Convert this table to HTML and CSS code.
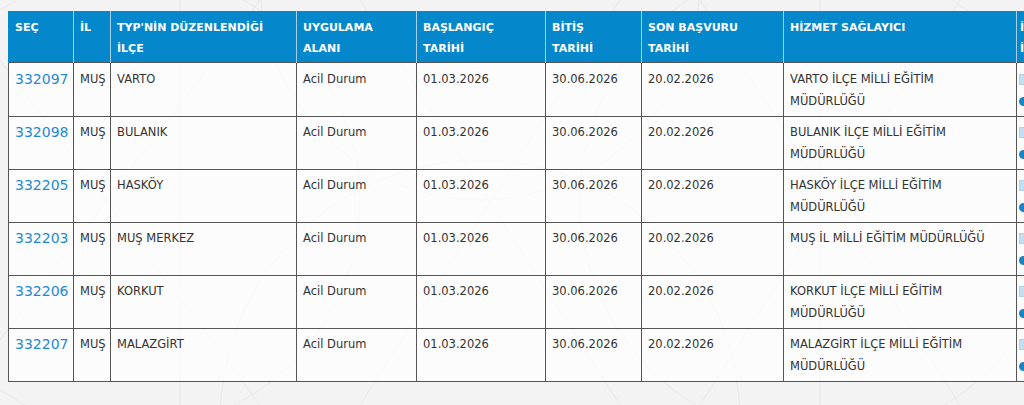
FILE: index.html
```html
<!DOCTYPE html>
<html lang="tr">
<head>
<meta charset="utf-8">
<title>TYP Listesi</title>
<link rel="stylesheet" href="styles.css">
</head>
<body>
<svg class="bg-pattern" width="1024" height="405" viewBox="0 0 1024 405" aria-hidden="true">
  <g fill="none" stroke="#e8e8e8" stroke-width="1">
    <circle cx="130" cy="200" r="230"/>
    <circle cx="480" cy="420" r="260"/>
    <circle cx="480" cy="-20" r="220"/>
    <circle cx="820" cy="200" r="240"/>
    <path d="M0 60 L260 405 M260 0 L0 340 M360 0 L620 405 M620 0 L360 405 M700 0 L960 405 M960 0 L700 405 M180 0 L180 405 M820 0 L820 405"/>
  </g>
</svg>
<div class="wrap">
  <table class="grid">
    <colgroup>
      <col class="c-sec"><col class="c-il"><col class="c-ilce"><col class="c-alan"><col class="c-bas"><col class="c-bit"><col class="c-son"><col class="c-hiz"><col class="c-act">
    </colgroup>
    <thead>
      <tr>
        <th>SEÇ</th>
        <th>İL</th>
        <th>TYP'NİN DÜZENLENDİĞİ<br>İLÇE</th>
        <th>UYGULAMA<br>ALANI</th>
        <th>BAŞLANGIÇ<br>TARİHİ</th>
        <th>BİTİŞ<br>TARİHİ</th>
        <th>SON BAŞVURU<br>TARİHİ</th>
        <th>HİZMET SAĞLAYICI</th>
        <th class="act-head">İŞLEM<br>İLAN</th>
      </tr>
    </thead>
    <tbody>
      <tr>
        <td><a class="id" href="#">332097</a></td><td>MUŞ</td><td>VARTO</td><td>Acil Durum</td><td>01.03.2026</td><td>30.06.2026</td><td>20.02.2026</td><td class="hiz">VARTO İLÇE MİLLİ EĞİTİM MÜDÜRLÜĞÜ</td>
        <td class="act"><div class="act-line"><span class="sq"></span></div><div class="act-line"><span class="dot"></span></div></td>
      </tr>
      <tr>
        <td><a class="id" href="#">332098</a></td><td>MUŞ</td><td>BULANIK</td><td>Acil Durum</td><td>01.03.2026</td><td>30.06.2026</td><td>20.02.2026</td><td class="hiz">BULANIK İLÇE MİLLİ EĞİTİM MÜDÜRLÜĞÜ</td>
        <td class="act"><div class="act-line"><span class="sq"></span></div><div class="act-line"><span class="dot"></span></div></td>
      </tr>
      <tr>
        <td><a class="id" href="#">332205</a></td><td>MUŞ</td><td>HASKÖY</td><td>Acil Durum</td><td>01.03.2026</td><td>30.06.2026</td><td>20.02.2026</td><td class="hiz">HASKÖY İLÇE MİLLİ EĞİTİM MÜDÜRLÜĞÜ</td>
        <td class="act"><div class="act-line"><span class="sq"></span></div><div class="act-line"><span class="dot"></span></div></td>
      </tr>
      <tr>
        <td><a class="id" href="#">332203</a></td><td>MUŞ</td><td>MUŞ MERKEZ</td><td>Acil Durum</td><td>01.03.2026</td><td>30.06.2026</td><td>20.02.2026</td><td class="hiz">MUŞ İL MİLLİ EĞİTİM MÜDÜRLÜĞÜ</td>
        <td class="act"><div class="act-line"><span class="sq"></span></div><div class="act-line"><span class="dot"></span></div></td>
      </tr>
      <tr>
        <td><a class="id" href="#">332206</a></td><td>MUŞ</td><td>KORKUT</td><td>Acil Durum</td><td>01.03.2026</td><td>30.06.2026</td><td>20.02.2026</td><td class="hiz">KORKUT İLÇE MİLLİ EĞİTİM MÜDÜRLÜĞÜ</td>
        <td class="act"><div class="act-line"><span class="sq"></span></div><div class="act-line"><span class="dot"></span></div></td>
      </tr>
      <tr>
        <td><a class="id" href="#">332207</a></td><td>MUŞ</td><td>MALAZGİRT</td><td>Acil Durum</td><td>01.03.2026</td><td>30.06.2026</td><td>20.02.2026</td><td class="hiz">MALAZGİRT İLÇE MİLLİ EĞİTİM MÜDÜRLÜĞÜ</td>
        <td class="act"><div class="act-line"><span class="sq"></span></div><div class="act-line"><span class="dot"></span></div></td>
      </tr>
    </tbody>
  </table>
</div>
</body>
</html>
```

FILE: styles.css
```css
html, body {
  margin: 0;
  padding: 0;
  overflow: hidden;
}
body {
  background: #f3f3f3;
  font-family: "DejaVu Sans", Verdana, sans-serif;
  font-size: 11.5px;
  color: #333;
  width: 1024px;
  height: 405px;
  position: relative;
}
.bg-pattern {
  position: absolute;
  left: 0;
  top: 0;
  z-index: 0;
}
.wrap {
  position: relative;
  z-index: 1;
  margin: 11px 0 0 8px;
  width: 1016px;
  overflow: hidden;
}
.grid {
  border-collapse: collapse;
  table-layout: fixed;
  width: 1128px;
}
.c-sec { width: 65px; }
.c-il { width: 37px; }
.c-ilce { width: 186px; }
.c-alan { width: 120px; }
.c-bas { width: 129px; }
.c-bit { width: 96px; }
.c-son { width: 142px; }
.c-hiz { width: 233px; }
.c-act { width: 120px; }

.grid th {
  background: #0588cb;
  color: #fff;
  font-size: 11px;
  font-weight: bold;
  text-align: left;
  vertical-align: top;
  line-height: 21px;
  padding: 6px 6px 3px 6px;
  border-left: 1px solid #a6cfea;
  border-right: 1px solid #a6cfea;
  white-space: nowrap;
}
.grid th:first-child { border-left: 1px solid #0588cb; }
.grid th.act-head { padding-left: 3px; }

.grid td {
  background: rgba(255, 255, 255, 0.72);
  border: 1px solid #555;
  vertical-align: top;
  line-height: 22px;
  padding: 4px 6px 4px 6px;
  height: 44px;
}
.grid tbody tr:first-child td { padding-top: 5px; }
.grid td:first-child { padding-left: 6px; padding-right: 2px; }
.grid td.hiz { padding-right: 10px; }
.id {
  color: #1f8ad2;
  text-decoration: none;
  font-size: 14px;
}
.grid td.act {
  padding-left: 2px;
}
.act-line {
  height: 22px;
  display: flex;
  align-items: center;
}
.sq {
  display: block;
  width: 9px;
  height: 9px;
  background: #c4def1;
  border: 1px solid #b0d2ec;
}
.dot {
  display: block;
  width: 9px;
  height: 9px;
  border-radius: 50%;
  background: #1a84c6;
}
```
